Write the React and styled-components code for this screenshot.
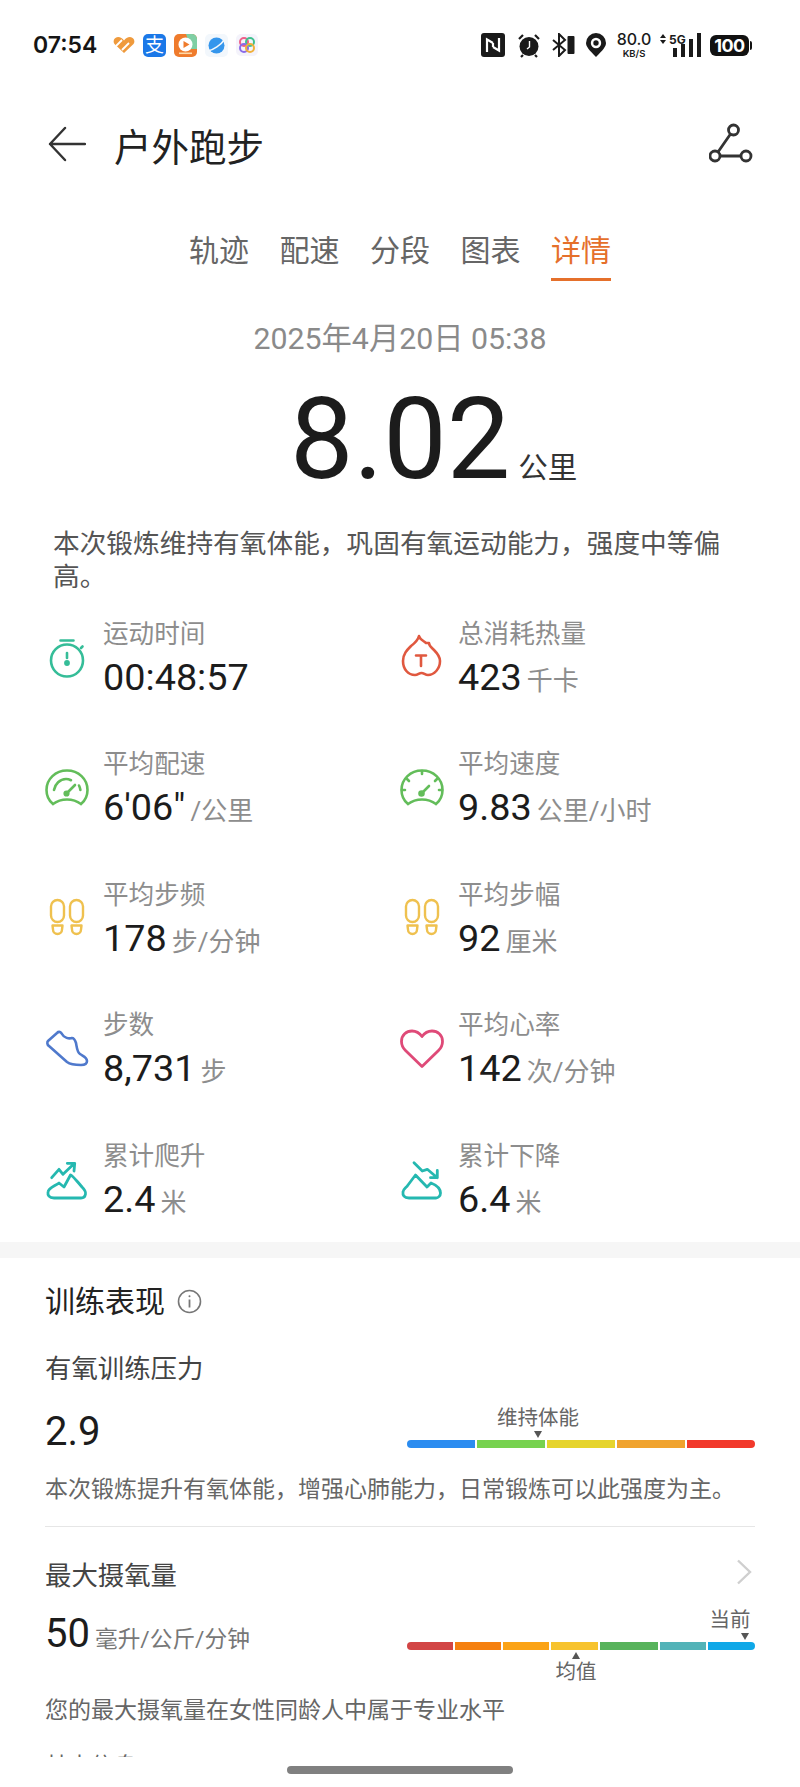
import React from 'react';
import styled, { createGlobalStyle } from 'styled-components';

const Global = createGlobalStyle`
  html, body { margin: 0; padding: 0; background: #fff; }
  body { font-family: Roboto, "Noto Sans CJK SC", sans-serif; color: #1a1a1a; }
  * { box-sizing: border-box; }
`;

const Page = styled.div`
  position: relative;
  width: 800px;
  height: 1787px;
  overflow: hidden;
  background: #fff;
`;

/* ---------- status bar ---------- */
const StatusBar = styled.div`
  height: 90px;
  padding: 0 49px 0 33px;
  display: flex;
  align-items: center;
  justify-content: space-between;
`;
const StatusGroup = styled.div`
  display: flex;
  align-items: center;
  gap: ${p => p.$gap || 0}px;
`;
const Time = styled.div`
  font-family: Inter, Roboto, sans-serif;
  font-size: 23px;
  font-weight: 600;
  width: 72px;
  color: #151515;
`;
const AlipayTile = styled.div`
  width: 23px;
  height: 23px;
  border-radius: 5px;
  background: #1b78e8;
  color: #fff;
  font-size: 19px;
  line-height: 23px;
  text-align: center;
`;
const Speed = styled.div`
  width: 40px;
  text-align: center;
  color: #1a1a1a;
  font-family: Inter, Roboto, sans-serif;
  font-weight: 500;
`;
const SpeedTop = styled.div`
  font-size: 16px;
  line-height: 17px;
`;
const SpeedBottom = styled.div`
  font-size: 9.5px;
  line-height: 11px;
  font-weight: 600;
`;
const Battery = styled.div`
  position: relative;
  width: 39px;
  height: 21px;
  border-radius: 6px;
  background: #111;
  color: #fff;
  font-family: Inter, Roboto, sans-serif;
  font-size: 18px;
  font-weight: 700;
  line-height: 21px;
  text-align: center;
  letter-spacing: -0.5px;
  margin-right: 2px;
  &::after {
    content: "";
    position: absolute;
    right: -3px;
    top: 6px;
    width: 2px;
    height: 9px;
    border-radius: 0 2px 2px 0;
    background: #111;
  }
`;

/* ---------- header ---------- */
const Header = styled.div`
  height: 108px;
  padding: 0 47px 0 48px;
  display: flex;
  align-items: center;
`;
const Title = styled.div`
  flex: 1;
  margin-left: 28px;
  font-size: 37.5px;
  color: #222;
`;
const Tabs = styled.div`
  margin-top: 23px;
  display: flex;
  gap: 30.5px;
  padding-left: 189px;
`;
const Tab = styled.div`
  height: 60px;
  font-size: 30px;
  line-height: 42px;
  padding-top: 9px;
  color: ${p => (p.$active ? '#e5702b' : '#666')};
  border-bottom: ${p => (p.$active ? '3px solid #e5702b' : '3px solid transparent')};
`;

/* ---------- summary ---------- */
const DateLine = styled.div`
  margin-top: 38px;
  text-align: center;
  font-size: 30.3px;
  line-height: 40px;
  color: #8a8a8a;
`;
const Distance = styled.div`
  margin-top: 25px;
  height: 112px;
  padding-left: 290px;
  display: flex;
  align-items: baseline;
`;
const DistanceValue = styled.span`
  font-size: 113px;
  line-height: 112px;
  color: #1c1c1c;
`;
const DistanceUnit = styled.span`
  margin-left: 8px;
  font-size: 29.5px;
  color: #333;
`;
const Summary = styled.p`
  margin: 32px 40px 0 53px;
  font-size: 26.7px;
  line-height: 33px;
  color: #555;
`;

/* ---------- metric grid ---------- */
const Grid = styled.div`
  margin-top: 23px;
  padding-left: 43px;
  display: grid;
  grid-template-columns: 355px 355px;
  grid-auto-rows: 100.4px;
  row-gap: 30px;
`;
const Metric = styled.div`
  display: flex;
  align-items: flex-start;
  gap: 12px;
`;
const MetricIcon = styled.div`
  width: 48px;
  height: 48px;
  margin-top: 16px;
  flex: none;
`;
const MetricLabel = styled.div`
  font-size: 25.6px;
  line-height: 34px;
  color: #8d8d8d;
`;
const MetricValue = styled.div`
  margin-top: 4px;
  display: flex;
  align-items: baseline;
  line-height: 44px;
`;
const Num = styled.span`
  font-size: 37.8px;
  color: #1c1c1c;
`;
const Unit = styled.span`
  margin-left: 5px;
  font-size: 26px;
  color: #8d8d8d;
`;

const Band = styled.div`
  height: 16px;
  margin-top: 3px;
  background: #f6f6f6;
`;

/* ---------- training ---------- */
const Section = styled.div`
  padding: 0 45px;
`;
const SectionTitle = styled.div`
  margin-top: 23px;
  display: flex;
  align-items: center;
  gap: 12px;
  font-size: 30px;
  line-height: 42px;
  color: #222;
`;
const SubTitle = styled.div`
  margin-top: ${p => p.$mt}px;
  display: flex;
  justify-content: space-between;
  align-items: center;
  font-size: 26.4px;
  line-height: 36px;
  color: #444;
`;
const Row = styled.div`
  margin-top: ${p => p.$mt}px;
  height: 52px;
  display: flex;
  align-items: center;
  justify-content: space-between;
`;
const BigValue = styled.div`
  margin-top: 4px;
  display: flex;
  align-items: baseline;
  gap: 5px;
`;
const BigNum = styled.span`
  font-size: 40px;
  color: #1c1c1c;
`;
const BigUnit = styled.span`
  font-size: 22.7px;
  color: #777;
`;
const Scale = styled.div`
  position: relative;
  width: 348px;
  height: 8px;
  margin-top: 28px;
`;
const Track = styled.div`
  height: 8px;
  display: flex;
  gap: 2px;
`;
const Seg = styled.div`
  flex: ${p => p.$grow};
  background: ${p => p.$color};
  &:first-child { border-radius: 4px 0 0 4px; }
  &:last-child { border-radius: 0 4px 4px 0; }
`;
const Mark = styled.div`
  position: absolute;
  left: ${p => p.$x}px;
  ${p => (p.$below ? 'top: 8px;' : 'bottom: 8px;')}
  width: 100px;
  margin-left: -50px;
  display: flex;
  flex-direction: ${p => (p.$below ? 'column-reverse' : 'column')};
  align-items: center;
  font-size: 20.5px;
  line-height: 26px;
  color: #666;
  white-space: nowrap;
`;
const Arrow = styled.div`
  width: 0;
  height: 0;
  margin: ${p => (p.$up ? '2px 0 0' : '0 0 2px')};
  border-left: 4px solid transparent;
  border-right: 4px solid transparent;
  transform: translateX(${p => p.$shift || 0}px);
  ${p => (p.$up ? 'border-bottom: 7px solid #555;' : 'border-top: 7px solid #555;')}
`;
const Note = styled.div`
  margin-top: ${p => p.$mt}px;
  font-size: ${p => p.$size}px;
  line-height: 34px;
  color: #666;
  white-space: nowrap;
`;
const Rule = styled.div`
  margin-top: 19px;
  height: 1px;
  background: #e6e6e6;
`;
const Footer = styled.div`
  position: absolute;
  left: 0;
  right: 0;
  bottom: 0;
  height: 30px;
  background: #fff;
`;
const HomeBar = styled.div`
  position: absolute;
  left: 287px;
  top: 9px;
  width: 226px;
  height: 8px;
  border-radius: 4px;
  background: #808080;
`;

/* ---------- icons ---------- */
const Sv = ({ w, h, vb, children, ...rest }) => (
  <svg width={w} height={h} viewBox={vb || `0 0 ${w} ${h}`} fill="none" {...rest}>{children}</svg>
);

const Stopwatch = () => (
  <Sv w={48} h={48} stroke="#35bd98" strokeWidth="2.6" strokeLinecap="round">
    <circle cx="24" cy="27.5" r="16" />
    <path d="M17.5 7.5h13M38 15l1.5-1.5" />
    <path d="M24 20v5" />
    <circle cx="24" cy="30" r="1.6" fill="#35bd98" />
  </Sv>
);
const Flame = () => (
  <Sv w={48} h={48} stroke="#e0583f" strokeWidth="2.6" strokeLinejoin="round" strokeLinecap="round">
    <path d="M21 3C22 7 26 8 28 10L31 10C31 13 33 14 36 17C40 21 42 24 42 28C42 36 36 42 30 42C27 42 26 40 23.500 40C21 40 20 42 17 42C10 42 5 36 5 28C5 21 9 17 13 13C17 10 20 7 21 3Z" />
    <path d="M18 22.500h10M23 22.500V33" />
  </Sv>
);
const GaugeA = () => (
  <Sv w={48} h={48} stroke="#63bd5a" strokeWidth="2.6" strokeLinecap="round">
    <path d="M10 41C5 37 3.500 32 3.500 27c0-11 9-19.500 20.500-19.500S44.500 16 44.500 27c0 5-1.500 10-6.500 14-4-3-9-4.500-14-4.500S14 38 10 41z" />
    <path d="M11 27c1-6 6-11 12-11 2 0 3.500.5 5 1.200M36 22.500c.8 1.500 1.200 3 1.400 4.500" />
    <path d="M24 30l8-8" />
    <circle cx="23.500" cy="30.500" r="1.800" fill="#63bd5a" />
  </Sv>
);
const GaugeB = () => (
  <Sv w={48} h={48} stroke="#63bd5a" strokeWidth="2.6" strokeLinecap="round">
    <path d="M10 41C5 37 3.500 32 3.500 27c0-11 9-19.500 20.500-19.500S44.500 16 44.500 27c0 5-1.500 10-6.500 14-4-3-9-4.500-14-4.500S14 38 10 41z" />
    <path d="M24 8v3M9 16l2 2M39 16l-2 2M4 27h3M44 27h-3" />
    <path d="M24 30l7-7" />
    <circle cx="23.500" cy="30.500" r="2" fill="#63bd5a" />
  </Sv>
);
const Feet = () => (
  <Sv w={48} h={48} stroke="#efc14f" strokeWidth="2.4" strokeLinejoin="round">
    <rect x="8" y="6" width="13" height="22" rx="6.500" />
    <path d="M9.500 31.500h10l-.5 4a4.500 4.500 0 0 1-9 0z" />
    <rect x="27" y="6" width="13" height="22" rx="6.500" />
    <path d="M28.500 31.500h10l-.5 4a4.500 4.500 0 0 1-9 0z" />
  </Sv>
);
const Shoe = () => (
  <Sv w={48} h={48} stroke="#4f79cc" strokeWidth="2.600" strokeLinejoin="round" strokeLinecap="round">
    <path d="M5 17L14 9C16 7 18 8 19 10C21 14 26 15 29 14C31 14 32 16 33 19C34 24 34 28 37 30C40 32 44 33 44 37C44 40 41 41 38 41C33 41 28 41 24 38L6 22C4 21 4 18 5 17Z" />
  </Sv>
);
const Heart = () => (
  <Sv w={48} h={48} stroke="#df4a78" strokeWidth="2.800" strokeLinejoin="round">
    <path d="M24 42.500 7.500 26.500C4.500 23.500 3.500 20.500 3.500 17.500 3.500 11 8.500 7 14 7c4 0 7.500 2 10 5.500C26.500 9 30 7 34 7c5.500 0 10.500 4 10.500 10.500 0 3-1 6-4 9z" />
  </Sv>
);
const MountUp = () => (
  <Sv w={48} h={48} stroke="#25b8b0" strokeWidth="2.800" strokeLinecap="round" strokeLinejoin="round">
    <path d="M11 43C6 43 4.500 40 5 37C5.500 33 12 31 16 28L21 32L27.500 20C29 20 34 26 39 32C42 35 43 37 42.500 39C42 42 40 43 38 43Z" />
    <path d="M8.700 22.700L16 14.300L20 19.300L31 8.700M24.300 8.300H31.700L31 16" />
  </Sv>
);
const MountDown = () => (
  <Sv w={48} h={48} stroke="#25b8b0" strokeWidth="2.800" strokeLinecap="round" strokeLinejoin="round">
    <path d="M11 43C6 43 4.500 40 5 37C5 34 8 33 10 30L17.500 20L29 32L33 28C38 30 42.500 33 42.500 38C42.500 41 40 43 38 43Z" />
    <path d="M16 7.700L24.300 16L29.300 14.300L39.300 22.700M39.300 15.500V22.700H32.500" />
  </Sv>
);

const InfoIcon = () => (
  <Sv w={25} h={25} stroke="#777" strokeWidth="1.600">
    <circle cx="12.500" cy="12.500" r="11" />
    <path d="M12.500 10.500v8" strokeWidth="1.800" />
    <circle cx="12.500" cy="7.200" r="1" fill="#777" stroke="none" />
  </Sv>
);

const metrics = [
  { label: '运动时间', value: '00:48:57', icon: <Stopwatch /> },
  { label: '总消耗热量', value: '423', unit: '千卡', icon: <Flame /> },
  { label: '平均配速', value: `6'06"`, unit: '/公里', icon: <GaugeA /> },
  { label: '平均速度', value: '9.83', unit: '公里/小时', icon: <GaugeB /> },
  { label: '平均步频', value: '178', unit: '步/分钟', icon: <Feet /> },
  { label: '平均步幅', value: '92', unit: '厘米', icon: <Feet /> },
  { label: '步数', value: '8,731', unit: '步', icon: <Shoe /> },
  { label: '平均心率', value: '142', unit: '次/分钟', icon: <Heart /> },
  { label: '累计爬升', value: '2.4', unit: '米', icon: <MountUp /> },
  { label: '累计下降', value: '6.4', unit: '米', icon: <MountDown /> },
];

const pressure = [
  ['#2b8cf0', 68], ['#77d24f', 68], ['#e6d42c', 68], ['#f0a32e', 68], ['#f2392b', 68],
];
const vo2 = [
  ['#d24545', 46], ['#f5800f', 46], ['#fba316', 46], ['#f7c32e', 46.500],
  ['#58b35c', 57.500], ['#52b3b8', 46], ['#0fa8e8', 47],
];

export default function App() {
  return (
    <Page>
      <Global />
      <StatusBar>
        <StatusGroup $gap={8}>
          <Time>07:54</Time>
          <Sv w={22} h={18} vb="0 0 22 18">
            <path d="M11 17 1.500 8C-.5 5.500 1 1 5 1c2.500 0 4.500 1.500 6 3.500C12.500 2.500 14.500 1 17 1c4 0 5.500 4.500 3.500 7z" fill="#ef9a3c" />
            <path d="M3 10l6-6M9 14l7-7" stroke="#fff" strokeWidth="1.800" />
          </Sv>
          <AlipayTile>支</AlipayTile>
          <Sv w={23} h={23}>
            <rect width="23" height="23" rx="5" fill="#ef7b2c" />
            <path d="M12 0h6a5 5 0 0 1 5 5v10h-6z" fill="#7fcfa4" />
            <circle cx="11.500" cy="10.500" r="7" fill="#fff" />
            <path d="M9.500 7l6 3.500-6 3.500z" fill="#ef7b2c" />
            <rect x="5" y="18.500" width="13" height="1.600" fill="#ffd9a8" />
          </Sv>
          <Sv w={23} h={23}>
            <rect width="23" height="23" rx="5" fill="#f2f7fc" />
            <circle cx="11.500" cy="11.500" r="8" fill="#3596ec" />
            <path d="M3 17C8 16 16 11 20 5" stroke="#f2f7fc" strokeWidth="1.500" />
          </Sv>
          <Sv w={22} h={22}>
            <rect width="22" height="22" rx="5" fill="#f4f3fb" />
            <circle cx="8" cy="8" r="4" stroke="#ef5f8a" strokeWidth="2" />
            <circle cx="14" cy="8" r="4" stroke="#3fc08e" strokeWidth="2" />
            <circle cx="8" cy="14" r="4" stroke="#8a6be8" strokeWidth="2" />
            <circle cx="14" cy="14" r="4" stroke="#f0b03a" strokeWidth="2" />
          </Sv>
        </StatusGroup>
        <StatusGroup $gap={8}>
          <Sv w={24} h={24}>
            <rect width="24" height="24" rx="3" fill="#1a1a1a" />
            <path d="M6 19V6.500l6 3.500M18 5v12.500L12 14M12 10v4" stroke="#fff" strokeWidth="2.200" fill="none" />
          </Sv>
          <Sv w={24} h={25} style={{ marginLeft: 4 }}>
            <circle cx="12" cy="13.500" r="9.500" fill="#1a1a1a" />
            <path d="M2 6l4-4M22 6l-4-4M6 22l-2 2M18 22l2 2" stroke="#1a1a1a" strokeWidth="2.200" />
            <path d="M12.500 8v6l-2.500 2" stroke="#fff" strokeWidth="1.400" />
          </Sv>
          <Sv w={23} h={24} style={{ marginLeft: 3 }}>
            <path d="M1 7l12 10-6 6V1l6 6L1 17" stroke="#1a1a1a" strokeWidth="2" />
            <rect x="15.500" y="3" width="7" height="18" rx="1" fill="#1a1a1a" />
          </Sv>
          <Sv w={20} h={24} style={{ marginLeft: 3 }}>
            <path d="M10 24C3 17 0 13.500 0 10a10 10 0 0 1 20 0c0 3.500-3 7-10 14z" fill="#1a1a1a" />
            <circle cx="10" cy="10" r="5.200" fill="#fff" />
            <circle cx="10" cy="10" r="2.700" fill="#1a1a1a" />
          </Sv>
          <Speed>
            <SpeedTop>80.0</SpeedTop>
            <SpeedBottom>KB/S</SpeedBottom>
          </Speed>
          <Sv w={42} h={24} vb="0 0 42 24" style={{ marginLeft: -2, overflow: 'visible' }}>
            <path d="M0 5l3-4 3 4zM0 7l3 4 3-4z" fill="#1a1a1a" />
            <text x="9" y="11" fontFamily="Inter, Roboto, sans-serif" fontSize="12" fontWeight="700" fill="#1a1a1a">5G</text>
            <rect x="13" y="15" width="4" height="9" fill="#1a1a1a" />
            <rect x="21" y="11" width="4" height="13" fill="#1a1a1a" />
            <rect x="29" y="6" width="4" height="18" fill="#1a1a1a" />
            <rect x="37" y="0" width="4" height="24" fill="#1a1a1a" />
          </Sv>
          <Battery>100</Battery>
        </StatusGroup>
      </StatusBar>

      <Header>
        <Sv w={38} h={36} stroke="#333" strokeWidth="2.400" strokeLinecap="round" strokeLinejoin="round">
          <path d="M37 18H2M17 2 2 18l15 16" />
        </Sv>
        <Title>户外跑步</Title>
        <Sv w={44} h={44} stroke="#333" strokeWidth="2.800">
          <circle cx="24.500" cy="8" r="5" />
          <circle cx="6" cy="34" r="5" />
          <circle cx="37" cy="34" r="5" />
          <path d="M21.500 12 9 30M11 34h21" />
        </Sv>
      </Header>

      <Tabs>
        <Tab>轨迹</Tab>
        <Tab>配速</Tab>
        <Tab>分段</Tab>
        <Tab>图表</Tab>
        <Tab $active>详情</Tab>
      </Tabs>

      <DateLine>2025年4月20日 05:38</DateLine>
      <Distance>
        <DistanceValue>8.02</DistanceValue>
        <DistanceUnit>公里</DistanceUnit>
      </Distance>
      <Summary>本次锻炼维持有氧体能，巩固有氧运动能力，强度中等偏高。</Summary>

      <Grid>
        {metrics.map(m => (
          <Metric key={m.label}>
            <MetricIcon>{m.icon}</MetricIcon>
            <div>
              <MetricLabel>{m.label}</MetricLabel>
              <MetricValue>
                <Num>{m.value}</Num>
                {m.unit && <Unit>{m.unit}</Unit>}
              </MetricValue>
            </div>
          </Metric>
        ))}
      </Grid>

      <Band />

      <Section>
        <SectionTitle>
          训练表现
          <InfoIcon />
        </SectionTitle>
        <SubTitle $mt={28}>有氧训练压力</SubTitle>
        <Row $mt={17}>
          <BigValue><BigNum>2.9</BigNum></BigValue>
          <Scale>
            <Track>
              {pressure.map(([c, g]) => <Seg key={c} $color={c} $grow={g} />)}
            </Track>
            <Mark $x={131}>维持体能<Arrow /></Mark>
          </Scale>
        </Row>
        <Note $mt={17} $size={23}>本次锻炼提升有氧体能，增强心肺能力，日常锻炼可以此强度为主。</Note>
        <Rule />
        <SubTitle $mt={31}>
          最大摄氧量
          <Sv w={16} h={26} stroke="#cfcfcf" strokeWidth="2.400" style={{ marginRight: 3, marginTop: -8 }}>
            <path d="M2 1.500 14 13 2 24.500" />
          </Sv>
        </SubTitle>
        <Row $mt={12}>
          <BigValue>
            <BigNum>50</BigNum>
            <BigUnit>毫升/公斤/分钟</BigUnit>
          </BigValue>
          <Scale>
            <Track>
              {vo2.map(([c, g]) => <Seg key={c} $color={c} $grow={g} />)}
            </Track>
            <Mark $x={323}>当前<Arrow $shift={15} /></Mark>
            <Mark $x={169} $below>均值<Arrow $up /></Mark>
          </Scale>
        </Row>
        <Note $mt={36} $size={23}>您的最大摄氧量在女性同龄人中属于专业水平</Note>
        <Note $mt={22} $size={23}>基本信息</Note>
      </Section>

      <Footer>
        <HomeBar />
      </Footer>
    </Page>
  );
}
